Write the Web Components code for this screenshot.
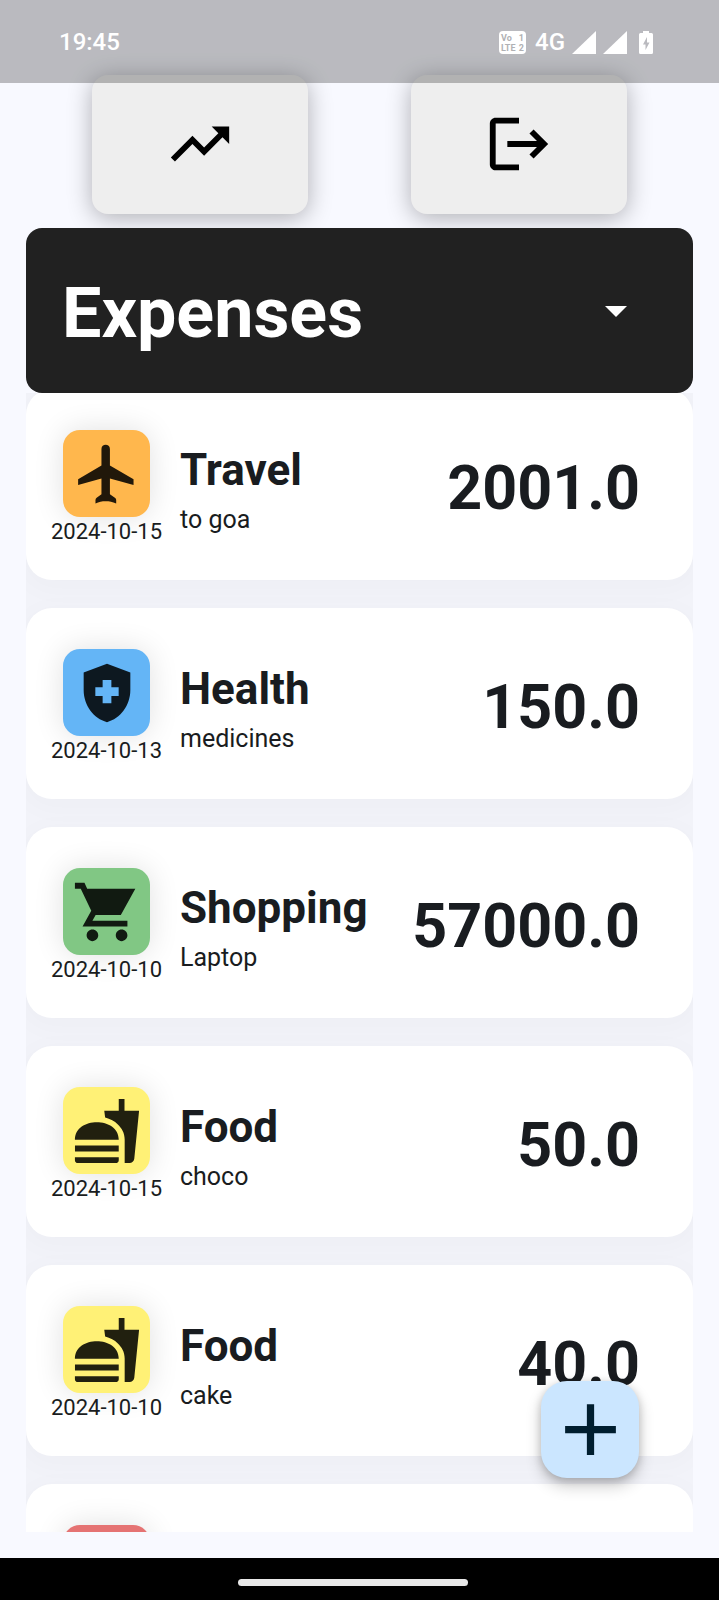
<!DOCTYPE html>
<html lang="en">
<head>
<meta charset="utf-8">
<meta name="viewport" content="width=device-width, initial-scale=1">
<title>Expenses</title>
<style>
  html, body { margin: 0; height: 100%; }
  body { background: #f8f9ff; color: #191c20; font-family: Roboto, "Liberation Sans", sans-serif; }
</style>
</head>
<body>
<expense-app></expense-app>

<script>
const ICONS = {
  trend: '<path d="M16 6l2.29 2.29-4.88 4.88-4-4L2 16.59 3.41 18l6-6 4 4 6.3-6.29L22 12V6z"/>',
  logout: '<path d="M17 7l-1.41 1.41L18.17 11H8v2h10.17l-2.58 2.58L17 17l5-5zM4 5h8V3H4c-1.1 0-2 .9-2 2v14c0 1.1.9 2 2 2h8v-2H4V5z"/>',
  add: '<path d="M19 13h-6v6h-2v-6H5v-2h6V5h2v6h6v2z"/>',
  travel: '<path d="M10.1 3.4C10.1 2.500 10.8 2 11.550 2s1.450.5 1.450 1.400v5.700l8.100 4.700v2l-8.100-2.300V18.900l1.700 1.200c.3.2.45.5.45.8v1.200c-1.300-.6-2.300-.8-3.600-.8s-2.300.2-3.500.8v-1.200c0-.3.15-.6.4-.8l1.650-1.200V13.500L2.100 15.800v-2l8-4.700z"/>',
  health: '<path d="M10.5 13H8v-3h2.5V7.5h3V10H16v3h-2.5v2.5h-3V13zM12 2L4 5v6.09c0 5.05 3.41 9.76 8 10.91 4.59-1.15 8-5.86 8-10.91V5l-8-3z" fill-rule="evenodd"/>',
  shopping: '<path d="M7 18c-1.1 0-1.99.9-1.99 2S5.9 22 7 22s2-.9 2-2-.9-2-2-2zM1 2v2h2l3.6 7.59L3.62 17H19v-2H7l1.1-2h8.64l4.97-9H5.21l-.94-2H1zm16 16c-1.1 0-1.99.9-1.99 2s.89 2 1.99 2 2-.9 2-2-.9-2-2-2z"/>',
  food: '<path d="M18.06 22.99h1.66c.84 0 1.53-.64 1.63-1.46L23 5.05h-5V1h-1.97v4.05h-4.97l.3 2.34c1.71.47 3.31 1.32 4.27 2.26 1.44 1.42 2.43 2.89 2.43 5.29v8.05zM1 21.99V21h15.03v.99c0 .55-.45 1-1.01 1H2.01c-.56 0-1.01-.45-1.01-1zm15.03-7c0-8-15.03-8-15.03 0h15.03zM1.02 17h15v2h-15z"/>',
  other: ''
};

class BaseElement extends HTMLElement {
  connectedCallback() {
    if (this.shadowRoot) return;
    this.attachShadow({ mode: 'open' }).innerHTML = this.render();
  }
}

customElements.define('app-icon', class extends BaseElement {
  render() {
    return `<style>
      :host { display: block; width: 70px; height: 70px; }
      svg { display: block; width: 100%; height: 100%; fill: currentColor; }
    </style>
    <svg viewBox="0 0 24 24" aria-hidden="true">${ICONS[this.getAttribute('name')] || ''}</svg>`;
  }
});

customElements.define('status-bar', class extends BaseElement {
  render() {
    return `<style>
      :host { display: flex; align-items: center; justify-content: space-between; box-sizing: border-box;
        height: 83px; padding: 1px 66px 0 59px; background: rgba(0,0,0,.25); color: #fff;
        font-size: 24px; font-weight: 500; line-height: 28px; }
      .icons { display: flex; align-items: center; }
      .volte { display: grid; grid-template-columns: 1fr auto; box-sizing: border-box; width: 27px; height: 23px;
        padding: 2px; border-radius: 4px; background: #fff; color: #b0b1b4; font-size: 9px; font-weight: 700; line-height: 10px; }
      .net { margin: 0 7px 0 9px; }
      svg { display: block; fill: #fff; }
      .sig { width: 24px; height: 23px; margin-right: 7px; }
      .bat { width: 14px; height: 23px; margin-left: 5px; }
    </style>
    <span>19:45</span>
    <div class="icons">
      <div class="volte"><span>Vo</span><span>1</span><span>LTE</span><span>2</span></div>
      <span class="net">4G</span>
      <svg class="sig" viewBox="0 0 24 23"><path d="M24 0v23H0z"/></svg>
      <svg class="sig" viewBox="0 0 24 23"><path d="M24 0v23H0z"/></svg>
      <svg class="bat" viewBox="0 0 14 23"><path fill-rule="evenodd" d="M4 0h6v2h2.500a1.500 1.500 0 0 1 1.500 1.500v18a1.500 1.500 0 0 1-1.500 1.500h-11a1.500 1.500 0 0 1-1.500-1.500v-18A1.500 1.500 0 0 1 1.500 2H4zM8 6l-4 7.500h2.500V19l4-7.500H8z"/></svg>
    </div>`;
  }
});

customElements.define('action-button', class extends BaseElement {
  render() {
    return `<style>
      :host { display: block; }
      button { display: block; margin: 0; padding: 34px 73px 35px; border: 0; border-radius: 16px;
        background: #eee; color: #000; box-shadow: 0 4px 24px rgba(0,0,0,.3); }
    </style>
    <button type="button" aria-label="${this.getAttribute('label')}"><slot></slot></button>`;
  }
});

customElements.define('type-picker', class extends BaseElement {
  render() {
    return `<style>
      :host { display: grid; align-items: center; background: #212121; border-radius: 16px; color: #fff; }
      select, svg { grid-area: 1 / 1; }
      select { appearance: none; width: 100%; height: 165px; margin: 0; padding: 4px 36px 0; border: 0; border-radius: 16px;
        background: transparent; color: inherit; font-family: inherit; font-size: 70px; font-weight: 700; }
      option { background: #212121; }
      svg { justify-self: end; width: 22px; height: 11px; margin: 2px 66px 0 0; fill: #fff; pointer-events: none; }
    </style>
    <select aria-label="Entry type"><option>Expenses</option><option>Income</option></select>
    <svg viewBox="0 0 22 11" aria-hidden="true"><path d="M0 0h22L11 11z"/></svg>`;
  }
});

customElements.define('expense-card', class extends BaseElement {
  render() {
    return `<style>
      :host { display: flex; align-items: center; padding: 41px 53px 34px 26px; border-radius: 26px;
        background: #fff; box-shadow: 0 6px 26px 6px rgba(0,0,0,.02); }
      .when { display: flex; flex-direction: column; align-items: center; width: 109px; margin-right: 19px; flex: none; }
      .tile { display: grid; place-items: center; width: 87px; height: 87px; border-radius: 17px;
        background: var(--tile); color: rgba(0,0,0,.87); box-shadow: 0 0 30px rgba(0,0,0,.12); }
      time { height: 29px; font-size: 22px; line-height: 30px; white-space: nowrap; }
      .what { display: flex; flex-direction: column; gap: 10px; flex: 1; min-width: 0; padding-top: 3px; }
      h2 { margin: 0; font-size: 44px; line-height: 50px; font-weight: 700; }
      p { margin: 0; font-size: 25px; line-height: 30px; }
      strong { font-size: 61px; line-height: 72px; font-weight: 700; }
    </style>
    <div class="when">
      <div class="tile"><app-icon name="${this.getAttribute('icon')}"></app-icon></div>
      <time>${this.getAttribute('date')}</time>
    </div>
    <div class="what"><h2>${this.getAttribute('name')}</h2><p><slot></slot></p></div>
    <strong>${this.getAttribute('amount')}</strong>`;
  }
});

customElements.define('nav-bar', class extends BaseElement {
  render() {
    return `<style>
      :host { display: grid; place-items: center; height: 42px; padding: 6px 14px 0 0; box-sizing: border-box; background: #000; }
      i { width: 230px; height: 7px; border-radius: 4px; background: #e8e8e8; }
    </style><i></i>`;
  }
});

customElements.define('fab-button', class extends BaseElement {
  render() {
    return `<style>
      :host { display: block; }
      button { display: grid; place-items: center; width: 98px; height: 97px; margin: 0; padding: 0; border: 0;
        border-radius: 26px; background: #cbe6ff; color: #001e2f;
        box-shadow: 0 8px 16px rgba(0,0,0,.2), 0 2px 8px rgba(0,0,0,.18); }
      app-icon { width: 87px; height: 87px; }
    </style>
    <button type="button" aria-label="Add expense"><app-icon name="add"></app-icon></button>`;
  }
});

customElements.define('expense-app', class extends BaseElement {
  render() {
    return `<style>
      :host { display: flex; flex-direction: column; height: 100vh; position: relative; overflow: hidden; }
      status-bar { position: absolute; top: 0; left: 0; right: 0; z-index: 2; }
      main { flex: 1; min-height: 0; display: flex; flex-direction: column; padding: 75px 26px 26px; position: relative; }
      .actions { display: flex; justify-content: space-around; padding: 0 14px 14px; }
      type-picker { position: relative; z-index: 1; }
      .list { flex: 1; min-height: 0; overflow: hidden; background: #f2f3f9; }
      .cards { display: flex; flex-direction: column; gap: 28px; margin-top: -4px; }
      fab-button { position: absolute; right: 80px; bottom: 80px; }
    </style>
    <status-bar></status-bar>
    <main>
      <div class="actions">
        <action-button label="Statistics"><app-icon name="trend"></app-icon></action-button>
        <action-button label="Log out"><app-icon name="logout"></app-icon></action-button>
      </div>
      <type-picker></type-picker>
      <div class="list"><div class="cards">
        <expense-card icon="travel" name="Travel" date="2024-10-15" amount="2001.0" style="--tile:#ffb74d">to goa</expense-card>
        <expense-card icon="health" name="Health" date="2024-10-13" amount="150.0" style="--tile:#64b5f6">medicines</expense-card>
        <expense-card icon="shopping" name="Shopping" date="2024-10-10" amount="57000.0" style="--tile:#81c784">Laptop</expense-card>
        <expense-card icon="food" name="Food" date="2024-10-15" amount="50.0" style="--tile:#fff176">choco</expense-card>
        <expense-card icon="food" name="Food" date="2024-10-10" amount="40.0" style="--tile:#fff176">cake</expense-card>
        <expense-card icon="other" name="" date="" amount="" style="--tile:#e57373"></expense-card>
      </div></div>
      <fab-button></fab-button>
    </main>
    <nav-bar></nav-bar>`;
  }
});
</script>
</body>
</html>
